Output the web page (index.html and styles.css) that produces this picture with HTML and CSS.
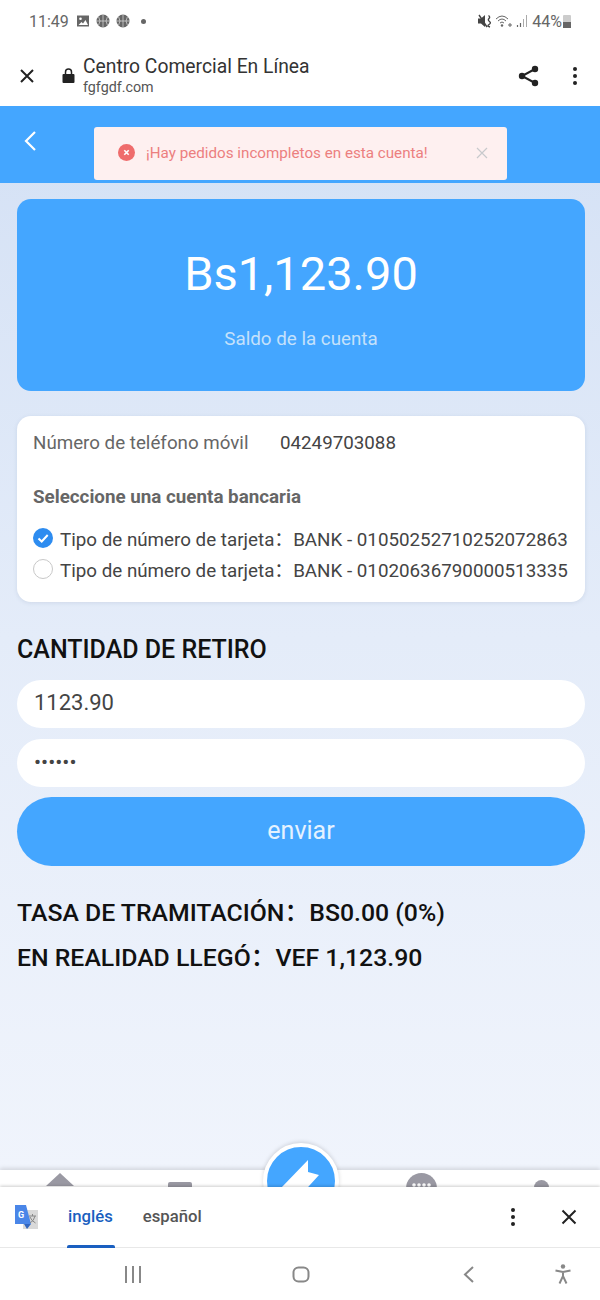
FILE: index.html
```html
<!DOCTYPE html>
<html lang="es">
<head>
    <meta charset="UTF-8">
    <meta name="viewport" content="width=device-width, initial-scale=1.0">
    <title>Centro Comercial En Línea</title>
    <link rel="stylesheet" href="styles.css">
</head>
<body>
    <div class="status-bar">
        <div class="status-left">
            <span class="clock">11:49</span>
            <svg class="st-icon" width="14" height="14" viewBox="0 0 14 14"><path fill="#666" d="M1 1.500h12v11H1z"/><circle cx="4.500" cy="4.800" r="1.300" fill="#fff"/><path fill="#fff" d="M2.500 11l3-3 1.500 1.500 2.500-3.500 2.500 5z"/></svg>
            <svg class="st-icon" width="14" height="14" viewBox="0 0 14 14"><circle cx="7" cy="7" r="6.500" fill="#666"/><path fill="none" stroke="#ddd" stroke-width=".7" d="M7 .5v13M.5 7h13M2.500 2.500q3 4.500 0 9M11.500 2.500q-3 4.500 0 9"/></svg>
            <svg class="st-icon" width="14" height="14" viewBox="0 0 14 14"><circle cx="7" cy="7" r="6.500" fill="#666"/><path fill="none" stroke="#ddd" stroke-width=".7" d="M7 .5v13M.5 7h13M2.500 2.500q3 4.500 0 9M11.500 2.500q-3 4.500 0 9"/></svg>
            <span class="st-dot"></span>
        </div>
        <div class="status-right">
            <svg width="14" height="14" viewBox="0 0 14 14"><path fill="#444" d="M0 4.500h3L7 1v12L3 9.500H0z"/><path fill="none" stroke="#444" stroke-width="1.400" d="M1 1l8 12M10.500 1.500q2 1.500.5 3t.5 3-.5 3 1 2.500"/></svg>
            <svg width="18" height="14" viewBox="0 0 18 14"><path fill="none" stroke="#666" stroke-width="1" d="M1 5q6-6 12 0M3 7q4-4 8 0M5 9q2-2 4 0"/><circle cx="7" cy="11.500" r="1.200" fill="#666"/><path stroke="#666" stroke-width="1" d="M13 11h4M15 9v4"/></svg>
            <svg width="13" height="14" viewBox="0 0 13 14"><path stroke="#666" stroke-width="1.200" d="M1.500 13v-2M4.500 13V9"/><path stroke="#aaa" stroke-width="1" d="M7.500 13V5M10.500 13V1"/></svg>
            <span class="battery-pct">44%</span>
            <span class="battery"><span class="battery-fill"></span></span>
        </div>
    </div>

    <div class="browser-bar">
        <svg class="br-close" width="16" height="16" viewBox="0 0 16 16"><path fill="none" stroke="#222" stroke-width="2" d="M2 2l12 12M14 2L2 14"/></svg>
        <svg class="br-lock" width="13" height="15" viewBox="0 0 13 15"><path fill="#222" d="M1.500 6h10a1 1 0 0 1 1 1v7a1 1 0 0 1-1 1h-10a1 1 0 0 1-1-1V7a1 1 0 0 1 1-1z"/><path fill="none" stroke="#222" stroke-width="1.500" d="M3.500 6.500V4a3 3 0 0 1 6 0v2.500"/></svg>
        <div class="br-title">
            <div class="br-name">Centro Comercial En Línea</div>
            <div class="br-url">fgfgdf.com</div>
        </div>
        <svg class="br-share" width="21" height="22" viewBox="0 0 21 22"><path fill="none" stroke="#222" stroke-width="2" d="M17 4L4 11l13 7"/><circle cx="17" cy="4" r="3.200" fill="#222"/><circle cx="4" cy="11" r="3.200" fill="#222"/><circle cx="17" cy="18" r="3.200" fill="#222"/></svg>
        <div class="kebab br-kebab"><i></i><i></i><i></i></div>
    </div>

    <main class="page">
        <header class="nav-bar">
            <svg width="14" height="22" viewBox="0 0 14 22"><path fill="none" stroke="#fff" stroke-width="2.200" d="M12 2L3 11l9 9"/></svg>
        </header>

        <div class="toast">
            <svg class="toast-icon" width="17" height="17" viewBox="0 0 17 17"><circle cx="8.500" cy="8.500" r="8.500" fill="#ef6c6c"/><path stroke="#fff" stroke-width="1.600" d="M6.300 6.300l4.400 4.400M10.700 6.300l-4.400 4.400"/></svg>
            <span class="toast-text">¡Hay pedidos incompletos en esta cuenta!</span>
            <svg class="toast-close" width="12" height="12" viewBox="0 0 12 12"><path stroke="#c8c9cc" stroke-width="1.200" d="M1 1l10 10M11 1L1 11"/></svg>
        </div>

        <section class="balance-card">
            <div class="balance-amount">Bs1,123.90</div>
            <div class="balance-label">Saldo de la cuenta</div>
        </section>

        <section class="info-card">
            <div class="phone-row">
                <span class="phone-label">Número de teléfono móvil</span>
                <span class="phone-value">04249703088</span>
            </div>
            <div class="bank-title">Seleccione una cuenta bancaria</div>
            <div class="bank-row">
                <svg width="20" height="20" viewBox="0 0 20 20"><circle cx="10" cy="10" r="10" fill="#2d8cf0"/><path fill="none" stroke="#fff" stroke-width="2" d="M5.500 10.500l3.200 3 6-6.500"/></svg>
                <span>Tipo de número de tarjeta：BANK - 01050252710252072863</span>
            </div>
            <div class="bank-row">
                <span class="radio-off"></span>
                <span>Tipo de número de tarjeta：BANK - 01020636790000513335</span>
            </div>
        </section>

        <h2 class="section-title">CANTIDAD DE RETIRO</h2>
        <div class="field">1123.90</div>
        <div class="field field-pass">••••••</div>
        <button class="submit-btn">enviar</button>

        <div class="summary">TASA DE TRAMITACIÓN：BS0.00 (0%)</div>
        <div class="summary">EN REALIDAD LLEGÓ：VEF 1,123.90</div>
    </main>

    <nav class="tab-bar">
        <svg class="tab-home" width="44" height="17" viewBox="0 0 44 17"><path fill="#9a99a3" d="M22 2l14 13H8z"/></svg>
        <span class="tab-rect"></span>
        <svg class="tab-round" width="31" height="31" viewBox="0 0 31 31"><circle cx="15.500" cy="15.500" r="15.500" fill="#9a99a3"/><circle cx="8" cy="12" r="1.800" fill="#fff"/><circle cx="13" cy="12" r="1.800" fill="#fff"/><circle cx="18" cy="12" r="1.800" fill="#fff"/><circle cx="23" cy="12" r="1.800" fill="#fff"/></svg>
        <span class="tab-user"></span>
        <div class="tab-center">
            <svg width="68" height="68" viewBox="0 0 68 68"><path fill="#fff" d="M41 13L14 41h14l-6 20 30-33-11-3z"/></svg>
        </div>
    </nav>

    <div class="translate-bar">
        <svg class="gt-logo" width="24" height="25" viewBox="0 0 24 25"><path fill="#d9d9d9" d="M9 5h15v19H9z"/><path fill="#4a86e8" d="M1 0h11l5 19H1z"/><path fill="#3367c0" d="M10 19h7l-4 5z"/><text x="4" y="13" class="gt-g">G</text><path fill="none" stroke="#888" stroke-width="1" d="M15 11h7M18.500 9v2M21 11q-1 5-5 7M16 12q1.500 4 5.500 6"/></svg>
        <div class="lang lang-on">inglés</div>
        <div class="lang">español</div>
        <div class="kebab tr-kebab"><i></i><i></i><i></i></div>
        <svg class="tr-close" width="16" height="16" viewBox="0 0 16 16"><path fill="none" stroke="#222" stroke-width="2" d="M1.500 1.500l13 13M14.500 1.500l-13 13"/></svg>
    </div>

    <div class="system-nav">
        <svg width="18" height="17" viewBox="0 0 18 17"><path stroke="#888" stroke-width="2" d="M2 0v17M9 0v17M16 0v17"/></svg>
        <svg width="18" height="17" viewBox="0 0 18 17"><rect x="1.500" y="1.500" width="15" height="14" rx="5" fill="none" stroke="#888" stroke-width="2"/></svg>
        <svg width="18" height="17" viewBox="0 0 18 17"><path fill="none" stroke="#888" stroke-width="2" d="M13 1L5 8.500l8 7.500"/></svg>
        <svg width="18" height="20" viewBox="0 0 18 20"><circle cx="9" cy="2.500" r="2.200" fill="#888"/><path fill="none" stroke="#888" stroke-width="2" d="M1.500 6.500L9 8l7.500-1.500M9 8v4M5.500 19.500L9 12l3.500 7.500"/></svg>
    </div>
</body>
</html>
```

FILE: styles.css
```css
* { box-sizing: border-box; }

body {
    margin: 0;
    width: 600px;
    height: 1300px;
    overflow: hidden;
    display: flex;
    flex-direction: column;
    background-color: #fff;
    font-family: Roboto, "Noto Sans CJK SC", sans-serif;
}

/* phone status bar */
.status-bar {
    height: 46px;
    flex-shrink: 0;
    display: flex;
    justify-content: space-between;
    align-items: center;
    padding: 0 29px 4px 29px;
    color: #666;
}
.status-left, .status-right { display: flex; align-items: center; }
.clock { font-size: 16px; margin-right: 7px; }
.st-icon { margin-right: 6px; }
.st-dot {
    width: 5px;
    height: 5px;
    margin-left: 5px;
    border-radius: 50%;
    background-color: #666;
}
.status-right svg { margin-right: 3px; }
.battery-pct { font-size: 16px; }
.battery {
    position: relative;
    width: 8px;
    height: 13px;
    margin-left: 1px;
    background-color: #ccc;
    border-radius: 1px;
}
.battery-fill {
    position: absolute;
    left: 0;
    right: 0;
    bottom: 0;
    height: 6px;
    background-color: #666;
}

/* browser custom tab bar */
.browser-bar {
    height: 60px;
    flex-shrink: 0;
    display: flex;
    align-items: center;
    padding-left: 19px;
}
.br-close { margin-right: 27px; }
.br-lock { margin: -2px 8px 0 0; }
.br-title { flex: 1; }
.br-name { font-size: 19.300px; line-height: 22px; color: #333; }
.br-url { font-size: 14.300px; line-height: 18px; color: #555; }
.br-share { margin-right: 34px; }
.br-kebab { margin-right: 23px; }

.kebab { display: flex; flex-direction: column; gap: 3px; }
.kebab i {
    display: block;
    width: 4px;
    height: 4px;
    border-radius: 50%;
    background-color: #222;
}

/* web page */
.page {
    height: 1064px;
    flex-shrink: 0;
    position: relative;
    padding: 0 15px 0 17px;
    background: linear-gradient(#d4e1f5, #e4ecf9 50%, #f0f4fc);
}
.nav-bar {
    height: 77px;
    margin: 0 -15px 16px -17px;
    padding: 24px 0 0 23px;
    background-color: #44a6ff;
}
.toast {
    position: absolute;
    left: 94px;
    top: 21px;
    width: 413px;
    height: 53px;
    display: flex;
    align-items: center;
    padding: 0 19px 2px 24px;
    background-color: #fef0f0;
    border-radius: 3px;
}
.toast-icon { margin-right: 11px; }
.toast-text { flex: 1; font-size: 15.200px; color: #ec7f7f; }

.balance-card {
    height: 192px;
    margin-bottom: 25px;
    padding-top: 45px;
    text-align: center;
    color: #fff;
    background-color: #44a6ff;
    border-radius: 14px;
}
.balance-amount { font-size: 47px; line-height: 60px; }
.balance-label { margin-top: 24px; font-size: 18.800px; line-height: 22px; color: #c4e1fb; }

.info-card {
    height: 186px;
    margin-bottom: 33px;
    padding: 16px 16px 0;
    background-color: #fff;
    border-radius: 14px;
    box-shadow: 0 1px 4px rgba(60, 80, 120, .12);
}
.phone-row { display: flex; font-size: 18.750px; line-height: 22px; }
.phone-label { width: 247px; color: #666; }
.phone-value { color: #444; }
.bank-title { margin: 32px 0 14px; font-size: 18.800px; line-height: 22px; font-weight: 700; color: #666; }
.bank-row {
    display: flex;
    align-items: center;
    height: 31px;
    font-size: 18.800px;
    color: #444;
    white-space: nowrap;
}
.bank-row svg, .radio-off { margin-right: 7px; flex-shrink: 0; }
.radio-off {
    width: 20px;
    height: 20px;
    border: 1px solid #c8c8c8;
    border-radius: 50%;
}

.section-title {
    margin: 0 0 15px;
    font-size: 25px;
    line-height: 30px;
    font-weight: 500;
    color: #111;
}
.field {
    height: 48px;
    margin-bottom: 11px;
    padding-left: 17px;
    font-size: 22px;
    line-height: 46px;
    color: #444;
    background-color: #fff;
    border-radius: 24px;
}
.field-pass { font-size: 21px; }
.submit-btn {
    display: block;
    width: 100%;
    height: 69px;
    margin-top: -1px;
    margin-bottom: 32px;
    padding-bottom: 3px;
    font-family: inherit;
    font-size: 25px;
    color: #e4f2ff;
    background-color: #44a6ff;
    border: none;
    border-radius: 35px;
}
.summary {
    margin-bottom: 15px;
    font-size: 24.800px;
    line-height: 30px;
    font-weight: 500;
    color: #111;
    white-space: nowrap;
}

/* app tab bar, cut off by the translate bar */
.tab-bar {
    position: relative;
    height: 17px;
    flex-shrink: 0;
    background-color: #fff;
    box-shadow: 0 -2px 4px rgba(0, 0, 0, .12);
}
.tab-home { position: absolute; left: 38px; top: 1px; }
.tab-rect {
    position: absolute;
    left: 168px;
    top: 12px;
    width: 24px;
    height: 10px;
    border-radius: 2px;
    background-color: #9a99a3;
}
.tab-round { position: absolute; left: 406px; top: 3px; }
.tab-user {
    position: absolute;
    left: 534px;
    top: 10px;
    width: 15px;
    height: 15px;
    border-radius: 50%;
    background-color: #9a99a3;
}
.tab-center {
    position: absolute;
    left: 263px;
    top: -27px;
    width: 76px;
    height: 76px;
    background-color: #44a6ff;
    border: 4px solid #fff;
    border-radius: 50%;
    box-shadow: 0 -1px 4px rgba(0, 0, 0, .15);
}

/* google translate bar */
.translate-bar {
    position: relative;
    z-index: 2;
    height: 61px;
    flex-shrink: 0;
    display: flex;
    align-items: center;
    padding-left: 14px;
    background-color: #fff;
    border-bottom: 1px solid #e8e8e8;
    box-shadow: 0 -1px 3px rgba(0, 0, 0, .2);
}
.gt-logo { margin: 0 30px 0 0; }
.gt-g { font-family: Roboto, sans-serif; font-size: 9px; font-weight: 700; fill: #fff; }
.lang {
    font-size: 16.700px;
    font-weight: 500;
    color: #555;
    margin-right: 30px;
    line-height: 62px;
}
.lang-on {
    position: relative;
    color: #1a5fc0;
}
.lang-on::after {
    content: "";
    position: absolute;
    left: -1px;
    right: -2px;
    bottom: 0;
    height: 3px;
    background-color: #1a5fc0;
    border-radius: 2px 2px 0 0;
}
.tr-kebab { margin-left: auto; margin-right: 46px; }
.tr-close { margin-right: 23px; }

/* android nav buttons */
.system-nav {
    position: relative;
    z-index: 2;
    flex: 1;
    display: grid;
    grid-template-columns: 168px 168px 94px 18px;
    align-items: center;
    padding-left: 124px;
    background-color: #fff;
}
```
